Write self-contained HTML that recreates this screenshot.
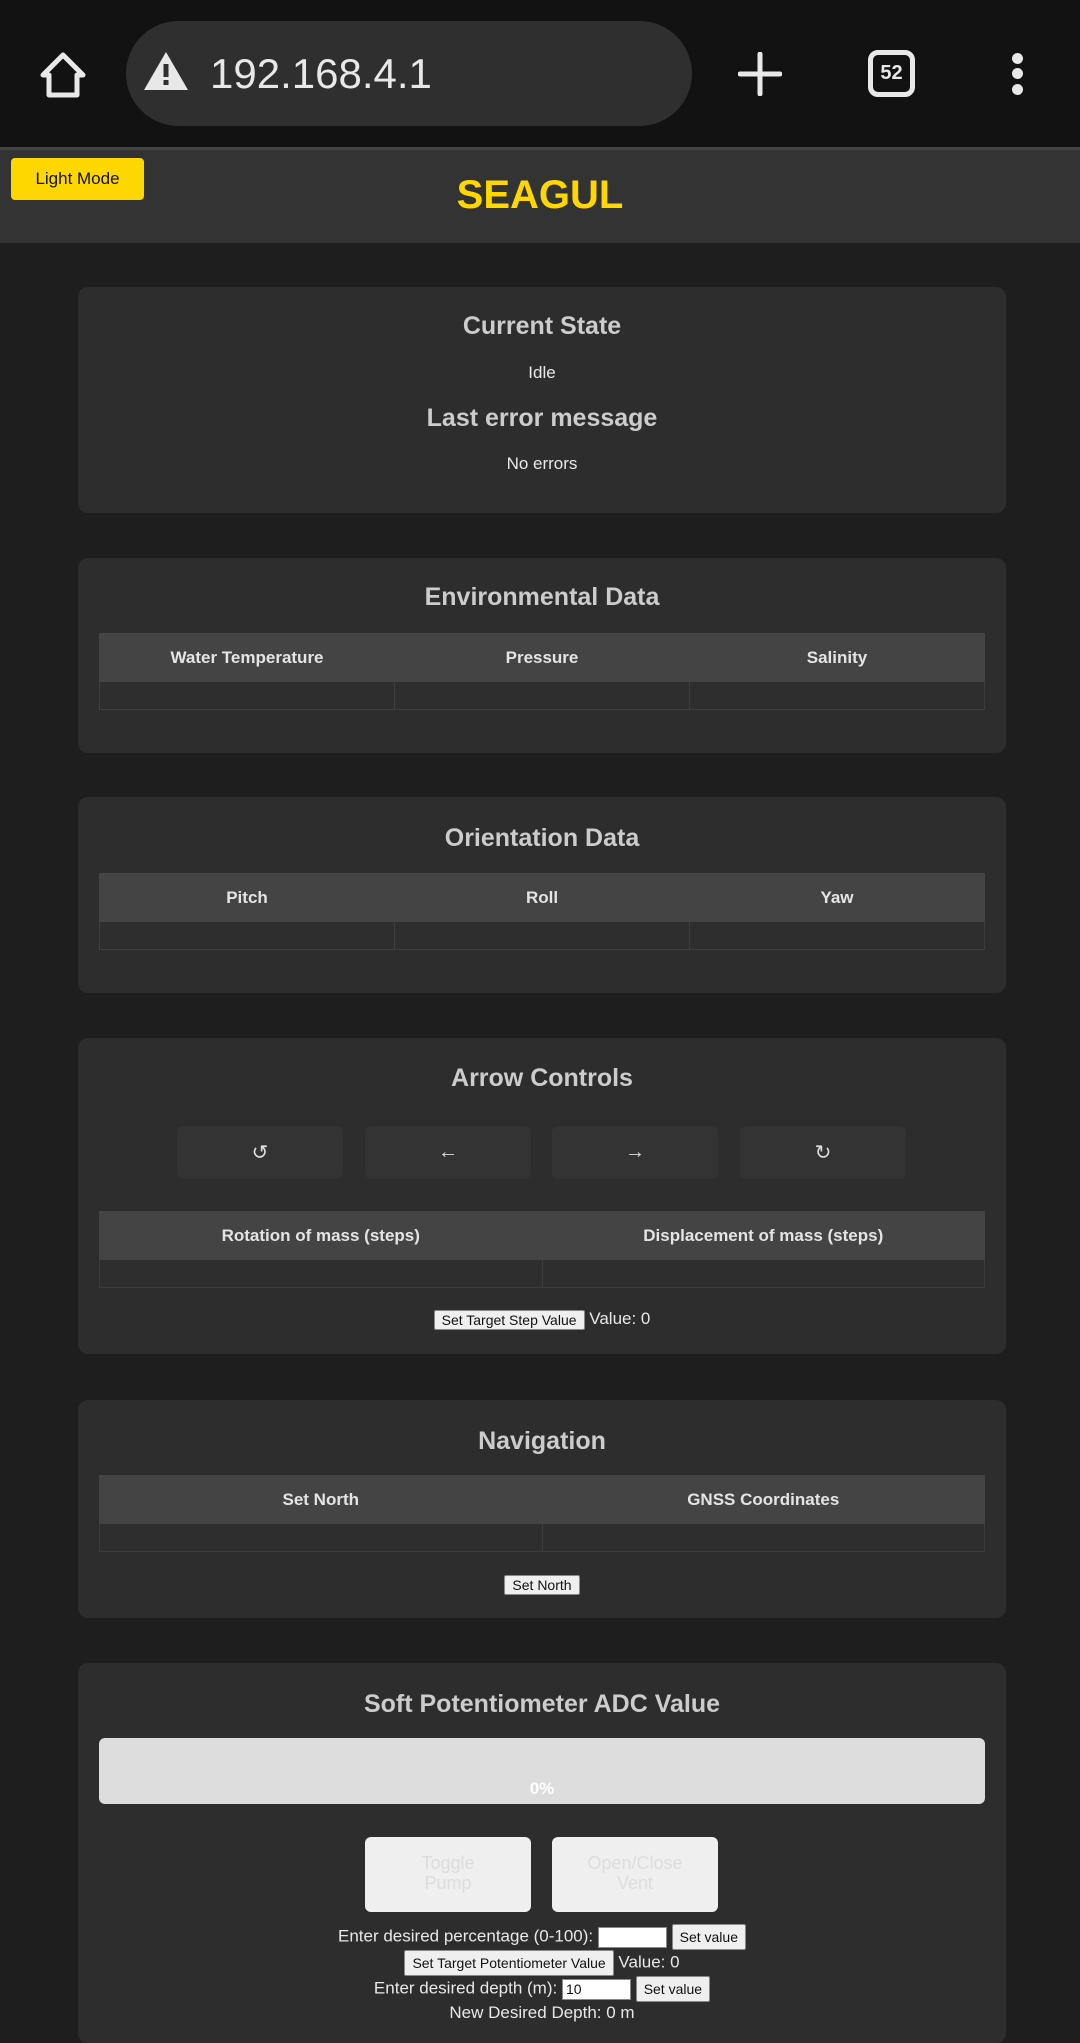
<!DOCTYPE html>
<html><head><meta charset="utf-8"><style>
*{box-sizing:border-box;margin:0;padding:0}
body{width:1080px;height:2035px;background:#1e1e1e;font-family:"Liberation Sans",Arial,sans-serif;position:relative;overflow:hidden;color:#ddd}
.a{position:absolute}
.card{position:absolute;left:78px;width:928px;background:#2d2d2d;border-radius:10px}
.t{position:absolute;left:0;width:100%;text-align:center;font-weight:bold;font-size:25px;color:#ccc}
.p{position:absolute;left:0;width:100%;text-align:center;font-size:17px;color:#e8e8e8}
table{position:absolute;left:21px;width:886px;border-collapse:collapse;table-layout:fixed}
th{background:#444;height:48px;font-size:17px;color:#e4e4e4;font-weight:bold;border:1px solid #444}
td{height:28px;border:1px solid #3d3d3d;background:#2e2e2e}
.btn{position:absolute;background:#333;border-radius:6px;height:53px;width:166px;color:#ddd;font-size:20px;display:flex;align-items:center;justify-content:center}
.wb{display:inline-block;background:#efefef;color:#111;border:1px solid #888;border-radius:2px;font-size:14px;padding:1px 7px;vertical-align:middle}
.in{display:inline-block;background:#fff;border:1px solid #888;width:69px;height:21px;vertical-align:middle;font-size:14px;color:#111;text-align:left;padding-left:3px;line-height:19px}
</style></head><body>
<div class="a" style="left:0;top:0;width:1080px;height:147px;background:#121212"></div>
<svg class="a" style="left:38px;top:50px" width="50" height="50" viewBox="0 0 50 50"><path d="M25 5 L5 25 H11 V45 H39 V25 H45 Z" fill="none" stroke="#e8e8e8" stroke-width="5" stroke-linejoin="round"/></svg>
<div class="a" style="left:126px;top:21px;width:566px;height:105px;background:#2f2f2f;border-radius:53px"></div>
<svg class="a" style="left:142px;top:50px" width="48" height="42" viewBox="0 0 48 42"><path d="M24 2 L46 40 H2 Z" fill="#e8e8e8"/><rect x="21.5" y="14" width="5" height="13" fill="#2f2f2f"/><rect x="21.5" y="30" width="5" height="5" fill="#2f2f2f"/></svg>
<div class="a" style="left:210px;top:50px;font-size:42px;color:#e8e8e8">192.168.4.1</div>
<svg class="a" style="left:738px;top:52px" width="44" height="44"><path d="M22 2V42M2 22H42" stroke="#e8e8e8" stroke-width="5" stroke-linecap="round"/></svg>
<div class="a" style="left:868px;top:50px;width:47px;height:47px;border:5px solid #e8e8e8;border-radius:10px;color:#e8e8e8;font-weight:bold;font-size:20px;text-align:center;line-height:37px">52</div>
<div class="a" style="left:1012px;top:53px;width:11px;height:11px;border-radius:50%;background:#e8e8e8"></div>
<div class="a" style="left:1012px;top:68px;width:11px;height:11px;border-radius:50%;background:#e8e8e8"></div>
<div class="a" style="left:1012px;top:84px;width:11px;height:11px;border-radius:50%;background:#e8e8e8"></div>
<div class="a" style="left:0;top:147px;width:1080px;height:3px;background:#444"></div>
<div class="a" style="left:0;top:150px;width:1080px;height:93px;background:#333"></div>
<div class="a" style="left:11px;top:158px;width:133px;height:42px;background:#ffd700;border-radius:4px;color:#111;font-size:17px;text-align:center;line-height:42px">Light Mode</div>
<div class="a" style="left:0;top:173px;width:1080px;text-align:center;font-size:40px;font-weight:bold;color:#ffd700">SEAGUL</div>

<div class="card" style="top:287px;height:226px">
<div class="t" style="top:25px">Current State</div>
<div class="p" style="top:76px">Idle</div>
<div class="t" style="top:117px">Last error message</div>
<div class="p" style="top:167px">No errors</div>
</div>

<div class="card" style="top:558px;height:195px">
<div class="t" style="top:25px">Environmental Data</div>
<table style="top:75px"><tr><th>Water Temperature</th><th>Pressure</th><th>Salinity</th></tr><tr><td></td><td></td><td></td></tr></table>
</div>

<div class="card" style="top:797px;height:196px">
<div class="t" style="top:27px">Orientation Data</div>
<table style="top:76px"><tr><th>Pitch</th><th>Roll</th><th>Yaw</th></tr><tr><td></td><td></td><td></td></tr></table>
</div>

<div class="card" style="top:1038px;height:316px">
<div class="t" style="top:26px">Arrow Controls</div>
<div class="btn" style="left:99px;top:88px">↺</div>
<div class="btn" style="left:287px;top:88px">←</div>
<div class="btn" style="left:474px;top:88px">→</div>
<div class="btn" style="left:662px;top:88px">↻</div>
<table style="top:173px"><tr><th>Rotation of mass (steps)</th><th>Displacement of mass (steps)</th></tr><tr><td></td><td></td></tr></table>
<div class="p" style="top:271px"><span class="wb">Set Target Step Value</span> Value: 0</div>
</div>

<div class="card" style="top:1400px;height:218px">
<div class="t" style="top:27px">Navigation</div>
<table style="top:75px"><tr><th>Set North</th><th>GNSS Coordinates</th></tr><tr><td></td><td></td></tr></table>
<div class="p" style="top:174px"><span class="wb">Set North</span></div>
</div>

<div class="card" style="top:1663px;height:380px">
<div class="t" style="top:27px">Soft Potentiometer ADC Value</div>
<div class="a" style="left:21px;top:75px;width:886px;height:66px;background:#ddd;border-radius:6px;color:#fff;font-weight:bold;font-size:17px;text-align:center;padding-top:41px">0%</div>
<div class="a" style="left:287px;top:174px;width:166px;height:75px;background:#efefef;border-radius:6px;color:#ddd;font-size:18px;text-align:center;padding-top:16px;line-height:20px">Toggle<br>Pump</div>
<div class="a" style="left:474px;top:174px;width:166px;height:75px;background:#efefef;border-radius:6px;color:#ddd;font-size:18px;text-align:center;padding-top:16px;line-height:20px">Open/Close<br>Vent</div>
<div class="p" style="top:261px;line-height:22px">Enter desired percentage (0-100): <span class="in"></span> <span class="wb">Set value</span><br><span class="wb">Set Target Potentiometer Value</span> Value: 0<br>Enter desired depth (m): <span class="in">10</span> <span class="wb">Set value</span><br>New Desired Depth: 0 m</div>
</div>
</body></html>
